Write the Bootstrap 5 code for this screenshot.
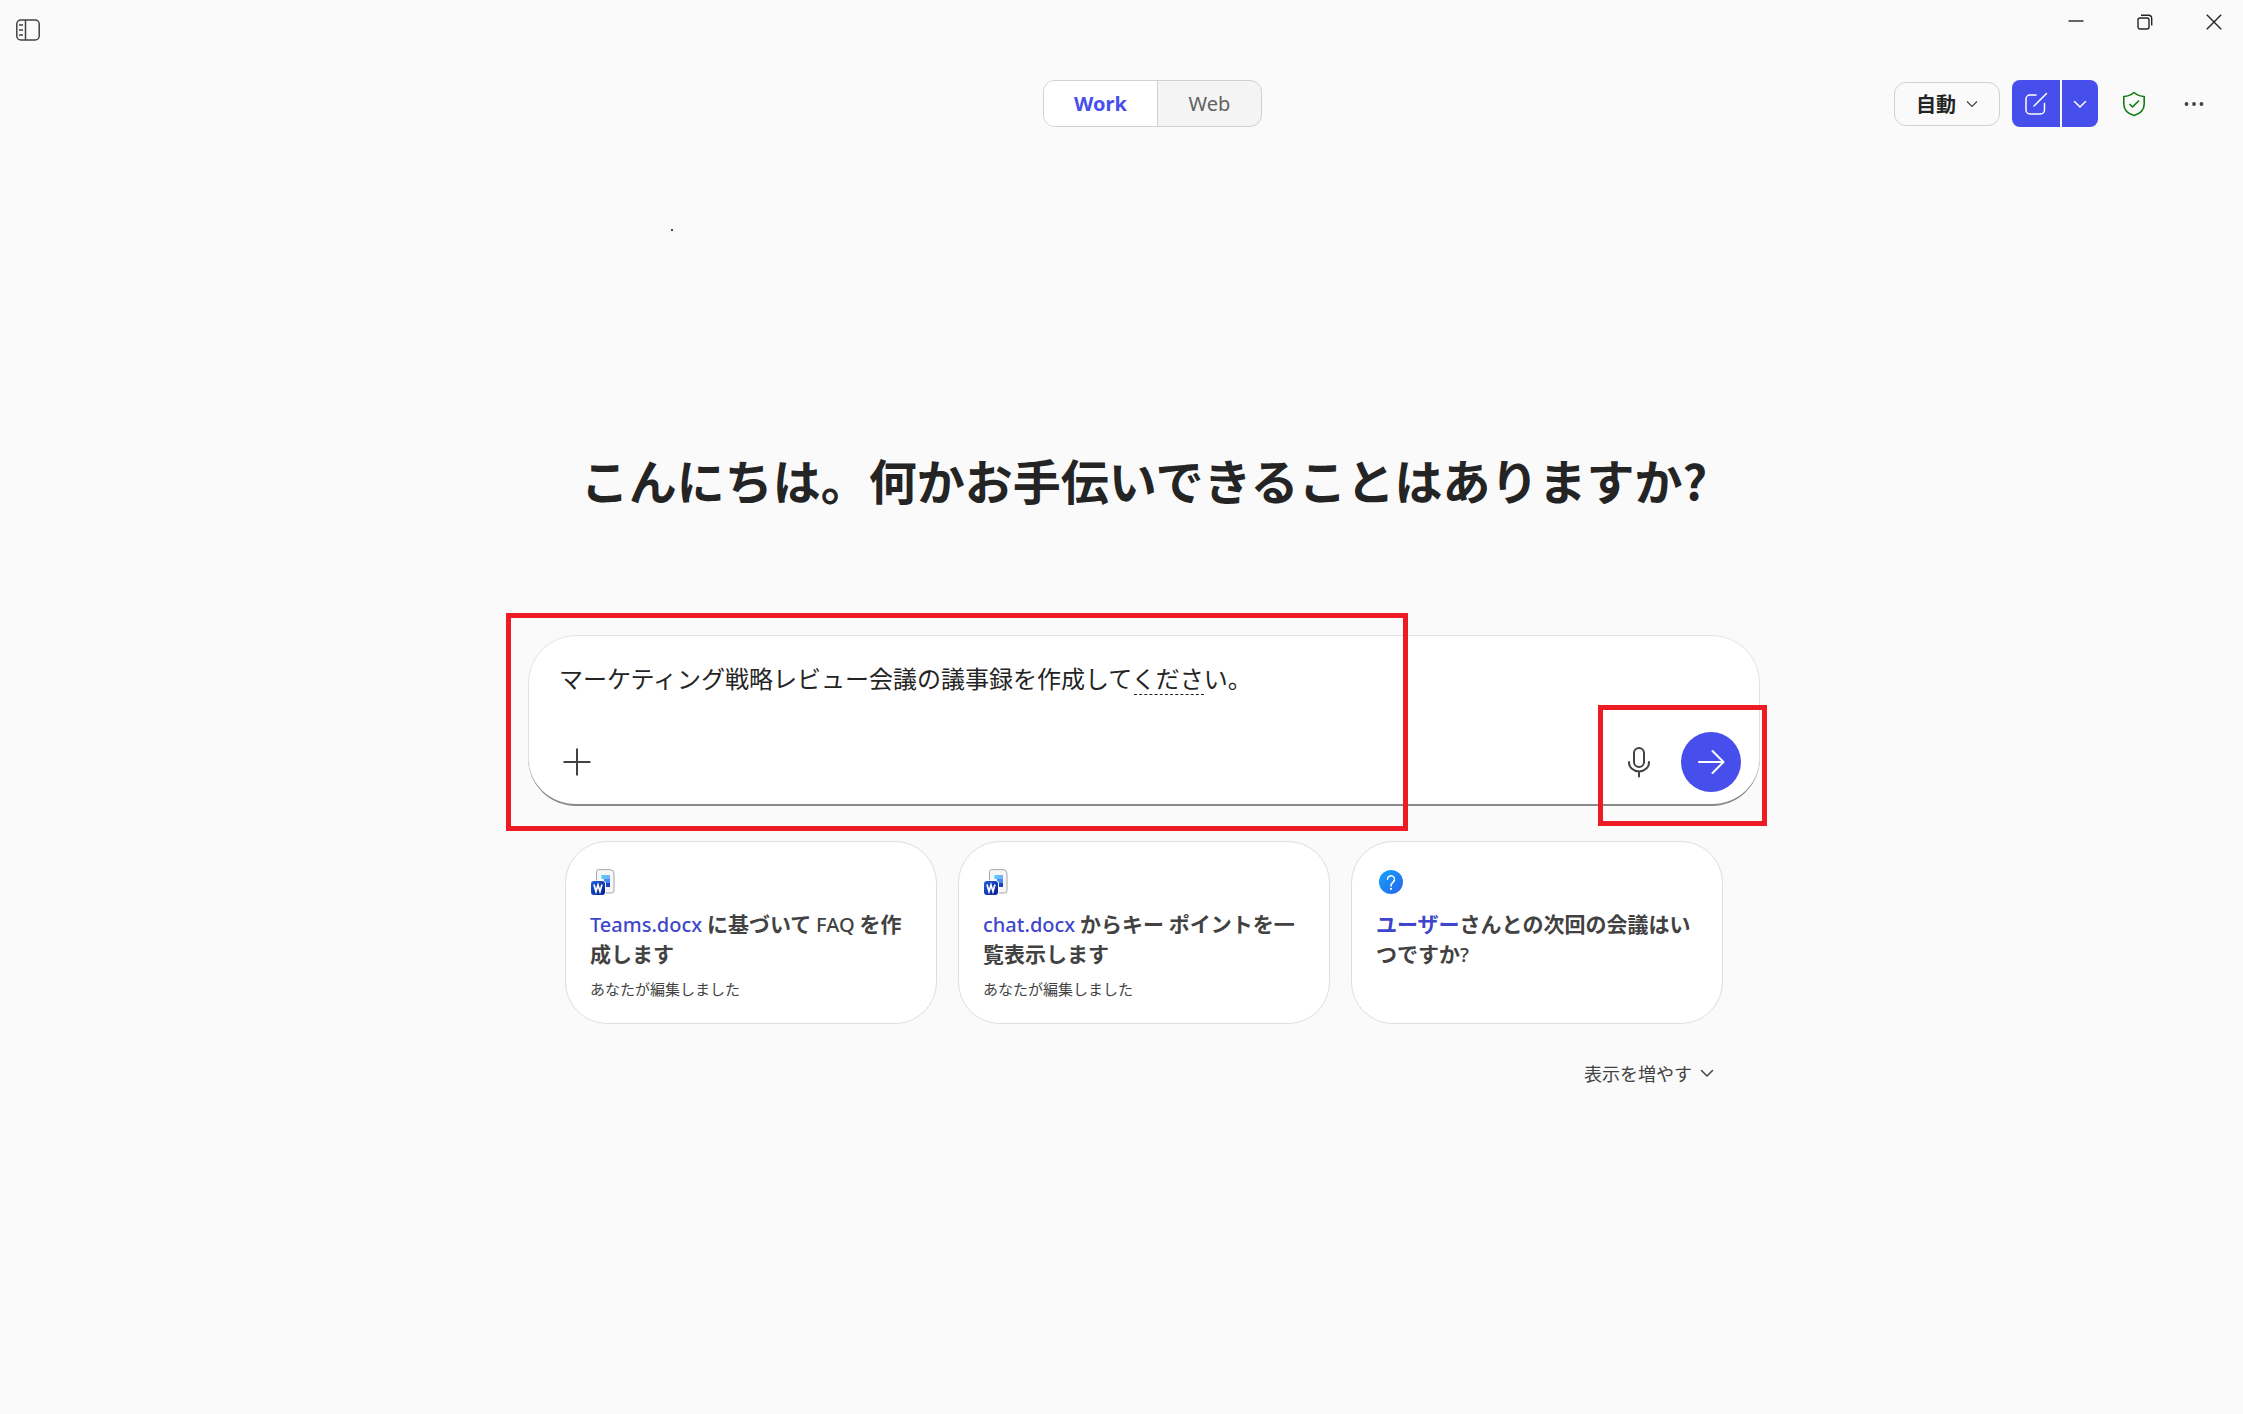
<!DOCTYPE html>
<html lang="ja">
<head>
<meta charset="utf-8">
<meta name="viewport" content="width=device-width, initial-scale=1">
<title>Copilot</title>
<link href="https://cdn.jsdelivr.net/npm/bootstrap@5.3.0/dist/css/bootstrap.min.css" rel="stylesheet">
<style>
  body { background: #fafafa; color: #242424; font-family: "Noto Sans", "Noto Sans CJK JP", sans-serif; }
  svg { display: block; flex: none; }
  .plain-btn { background: none; border: 0; padding: 0; color: #242424; display: flex; align-items: center; justify-content: center; }
  .titlebar { height: 44px; overflow: hidden; }
  .pane-toggle { width: 56px; padding-top: 16px; }
  .win-btn { width: 69px; height: 44px; }
  .win-controls { margin-right: -5px; }
  .toolbar-grid { display: grid; grid-template-columns: 1fr auto 1fr; padding: 36px 19px 0 81px; }
  .mode-switch { border: 1px solid #d1d1d1; border-radius: 12px; overflow: hidden; height: 47px; background: #f4f4f4; }
  .mode-switch button { width: 103px; font-size: 20px; color: #616161; }
  .mode-switch button.active { width: 114px; background: #fff; color: #464feb; font-weight: 700; border-right: 1px solid #d1d1d1; }
  .model-btn { width: 106px; height: 44px; border: 1px solid #d1d1d1; border-radius: 12px; font-size: 20px; font-weight: 700; gap: 10px; font-family: "Noto Sans CJK JP", sans-serif; }
  .new-chat { gap: 2px; height: 47px; margin: 0 6px 0 12px; }
  .new-chat button { background: #464feb; color: #fff; height: 47px; }
  .new-chat .compose { width: 48px; border-radius: 8px 0 0 8px; }
  .new-chat .more { width: 36px; border-radius: 0 8px 8px 0; }
  .tool-icon { width: 60px; height: 47px; }
  main { padding-left: 45px; }
  .greeting { font: 700 48px/64px "Noto Sans CJK JP", sans-serif; margin: 320px 0 124px; }
  .composer { max-width: 1232px; height: 171px; background: #fff; border: 1px solid #e3e3e3; border-radius: 48px; padding: 22px 18px 13px 30px; }
  .composer::after { content: ""; position: absolute; inset: -1px; border-bottom: 2px solid #8a8a8a; border-radius: 48px; pointer-events: none; }
  .composer textarea { font: 24px/40px "Noto Sans CJK JP", sans-serif; color: #242424; border: 0; padding: 0; resize: none; height: 40px; outline: 0; background: none; }
  .spell-mark { position: absolute; left: 605px; top: 58px; width: 70px; border-top: 1px dashed #242424; }
  .send-btn { width: 60px; height: 60px; border-radius: 50%; background: #464feb; color: #fff; }
  .mic-btn { width: 60px; height: 60px; margin-right: 12px; }
  .frame { position: absolute; border: 5px solid #ed1c24; pointer-events: none; z-index: 2; }
  .frame-prompt { left: -23px; top: -23px; width: 902px; height: 218px; }
  .frame-send { right: -8px; top: 69px; width: 169px; height: 121px; }
  .suggest { max-width: 1158px; margin-top: 35px; }
  .suggest-grid { display: grid; grid-template-columns: repeat(3, 1fr); gap: 21px; }
  .tip { background: #fff; border: 1px solid #dedede; border-radius: 42px; min-height: 183px; padding: 27px 24px 20px; color: #424242; text-decoration: none; }
  .tip:hover { color: #424242; }
  .tip-title { font: 700 21px/30px "Noto Sans CJK JP", sans-serif; margin: 13px 0 10px; }
  .tip-title .latin { font: 500 20px/20px "Noto Sans", sans-serif; }
  .tip-title .who { color: #4046cc; }
  .tip-note { font: 15px/22px "Noto Sans CJK JP", sans-serif; }
  .show-more { font: 18px/26px "Noto Sans CJK JP", sans-serif; color: #424242; gap: 8px; margin: 36px 9px 0 0; }
  .speck { position: absolute; left: 671px; top: 229px; width: 2px; height: 2px; background: #444; }
</style>
</head>
<body class="min-vh-100 position-relative">
<div class="titlebar d-flex justify-content-between">
  <button class="plain-btn pane-toggle" aria-label="サイドバー">
    <svg width="24" height="24" viewBox="0 0 24 24" fill="none" stroke="#424242" stroke-width="1.5"><rect x=".8" y="2" width="22.4" height="20" rx="4"/><path d="M9.5 2v20M3 7h4M3 12h4M3 17h4"/></svg>
  </button>
  <div class="win-controls d-flex">
    <button class="plain-btn win-btn" aria-label="最小化"><svg width="16" height="16" viewBox="0 0 16 16" stroke="currentColor" stroke-width="1.4"><path d="M.5 7h15"/></svg></button>
    <button class="plain-btn win-btn" aria-label="元に戻す"><svg width="16" height="16" viewBox="0 0 16 16" fill="none" stroke="currentColor" stroke-width="1.4"><rect x="1" y="4" width="11" height="11" rx="2"/><path d="M4 1.2h7.5a3.2 3.2 0 0 1 3.2 3.2v7.2"/></svg></button>
    <button class="plain-btn win-btn" aria-label="閉じる"><svg width="16" height="16" viewBox="0 0 16 16" stroke="currentColor" stroke-width="1.4"><path d="m.8.8 14.4 14.4M15.2.8.8 15.2"/></svg></button>
  </div>
</div>
<header class="toolbar-grid">
  <span></span>
  <div class="mode-switch d-flex">
    <button class="plain-btn active">Work</button>
    <button class="plain-btn">Web</button>
  </div>
  <div class="d-flex justify-content-end align-items-center">
    <button class="plain-btn model-btn">自動<svg width="12" height="12" viewBox="0 0 12 12" fill="none" stroke="#424242" stroke-width="1.2"><path d="m1 3.5 5 5 5-5"/></svg></button>
    <div class="new-chat d-flex">
      <button class="plain-btn compose" aria-label="新しいチャット"><svg width="24" height="24" viewBox="0 0 24 24" fill="none" stroke="currentColor" stroke-width="1.5" stroke-linecap="round"><path d="M12 3H6a4 4 0 0 0-4 4v11a4 4 0 0 0 4 4h10.500a4 4 0 0 0 4-4v-6.500M10 14 22.500 1.500"/></svg></button>
      <button class="plain-btn more" aria-label="その他の新規作成"><svg width="14" height="14" viewBox="0 0 14 14" fill="none" stroke="currentColor" stroke-width="1.5" stroke-linecap="round"><path d="m1.500 4.500 5.500 5.500 5.500-5.500"/></svg></button>
    </div>
    <button class="plain-btn tool-icon" aria-label="保護"><svg width="24" height="26" viewBox="0 0 24 26" fill="none" stroke="#107c10" stroke-width="1.6" stroke-linejoin="round"><path d="M12 1.500c3 2.500 6.300 3.700 10.200 4v7.500c0 5.500-3.700 9.500-10.200 11.500C5.500 22.500 1.800 18.500 1.800 13V5.500C5.700 5.200 9 4 12 1.500z"/><path d="m7.500 13 3 3 6.500-6.500"/></svg></button>
    <button class="plain-btn tool-icon" aria-label="その他"><svg width="20" height="6" viewBox="0 0 20 6" fill="#424242"><circle cx="2.500" cy="3" r="1.900"/><circle cx="10" cy="3" r="1.900"/><circle cx="17.500" cy="3" r="1.900"/></svg></button>
  </div>
</header>
<main>
  <h1 class="greeting text-center">こんにちは。何かお手伝いできることはありますか?</h1>
  <div class="composer mx-auto position-relative d-flex flex-column justify-content-between">
    <textarea class="w-100" aria-label="メッセージ" spellcheck="false">マーケティング戦略レビュー会議の議事録を作成してください。</textarea>
    <span class="spell-mark"></span>
    <div class="d-flex align-items-center">
      <button class="plain-btn me-auto ps-1" aria-label="追加"><svg width="28" height="28" viewBox="0 0 28 28" stroke="#424242" stroke-width="2"><path d="M14 .5v27M.5 14h27"/></svg></button>
      <button class="plain-btn mic-btn" aria-label="マイク"><svg width="24" height="32" viewBox="0 0 24 32" fill="none" stroke="#424242" stroke-width="2" stroke-linecap="round"><rect x="7" y="2" width="10" height="19" rx="5"/><path d="M2 16v.5a10 9 0 0 0 20 0V16M12 26v4.500"/></svg></button>
      <button class="plain-btn send-btn" aria-label="送信"><svg width="28" height="26" viewBox="0 0 28 26" fill="none" stroke="currentColor" stroke-width="2" stroke-linecap="round" stroke-linejoin="round"><path d="M2 13h24M15.500 2 26.500 13l-11 11"/></svg></button>
    </div>
    <div class="frame frame-prompt"></div>
    <div class="frame frame-send"></div>
  </div>
  <section class="suggest mx-auto">
    <div class="suggest-grid">
      <a class="tip" href="#">
        <svg width="26" height="26" viewBox="-1 0 26 26"><use href="#word-file"/></svg>
        <div class="tip-title"><span class="who latin">Teams.docx</span> に基づいて <span class="latin">FAQ</span> を作成します</div>
        <div class="tip-note">あなたが編集しました</div>
      </a>
      <a class="tip" href="#">
        <svg width="26" height="26" viewBox="-1 0 26 26"><use href="#word-file"/></svg>
        <div class="tip-title"><span class="who latin">chat.docx</span> からキー ポイントを一覧表示します</div>
        <div class="tip-note">あなたが編集しました</div>
      </a>
      <a class="tip" href="#">
        <svg width="28" height="26" viewBox="0 0 28 26" fill="none"><circle cx="15" cy="13" r="12" fill="url(#ask-fill)"/><path d="M11.500 10.300a3.500 3.500 0 1 1 5.800 2.600c-1.500 1.300-2.300 2-2.300 4" stroke="#fff" stroke-width="1.500" stroke-linecap="round"/><circle cx="15" cy="19.800" r="1.100" fill="#fff"/></svg>
        <div class="tip-title"><span class="who">ユーザー</span>さんとの次回の会議はいつですか<span class="latin">?</span></div>
      </a>
    </div>
    <button class="plain-btn show-more ms-auto">表示を増やす<svg width="14" height="14" viewBox="0 0 14 14" fill="none" stroke="currentColor" stroke-width="1.500" stroke-linecap="round"><path d="m1.500 4.500 5.500 5.500 5.500-5.500"/></svg></button>
  </section>
</main>
<span class="speck"></span>
<svg class="position-absolute top-0" width="0" height="0">
  <defs>
    <linearGradient id="ask-fill" x1="0" y1="0" x2="1" y2="1"><stop stop-color="#12a5ff"/><stop offset="1" stop-color="#2764e7"/></linearGradient>
    <linearGradient id="word-tile" x1="0" y1="0" x2="1" y2="1"><stop stop-color="#1f62d8"/><stop offset="1" stop-color="#04188c"/></linearGradient>
    <linearGradient id="word-band" x1="0" y1="0" x2="1" y2="0"><stop stop-color="#3fd4ff"/><stop offset="1" stop-color="#86a8ff"/></linearGradient>
    <g id="word-file">
      <path d="M7.500.6h11.500q4 0 4 4v17q0 2.400-2.400 2.400H5.500V2.600Q5.500.6 7.500.6z" fill="#f6f6f6" stroke="#a6a6a6"/>
      <path d="M10.500 6h8.500v4h-8.500z" fill="url(#word-band)"/>
      <path d="M13 10h6v4h-6z" fill="#4f86f5"/><path d="M15 14h4v4h-4z" fill="#1742c8"/>
      <rect x="-.5" y="11.500" width="15.500" height="15.500" rx="3.500" fill="#fff"/>
      <rect y="12" width="14" height="14" rx="3" fill="url(#word-tile)"/>
      <path d="m3 15.500 2 7 2-6.500 2 6.500 2-7" fill="none" stroke="#fff" stroke-width="1.700"/>
    </g>
  </defs>
</svg>
<script src="https://cdn.jsdelivr.net/npm/bootstrap@5.3.0/dist/js/bootstrap.bundle.min.js"></script>
</body>
</html>
